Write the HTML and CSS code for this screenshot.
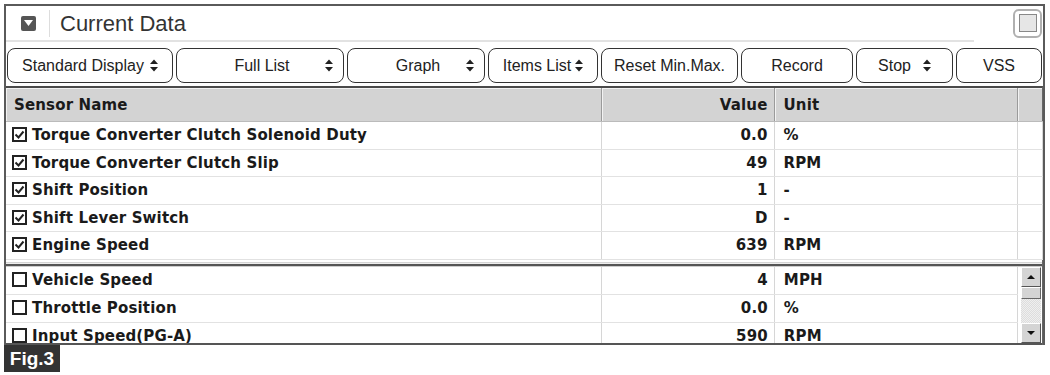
FILE: index.html
```html
<!DOCTYPE html>
<html lang="en">

<head>
    <meta charset="UTF-8">
    <meta name="viewport" content="width=device-width, initial-scale=1.0">
    <link rel="stylesheet" href="styles.css">
</head>

<body>
    <div class="panel">
        <div class="title-bar">
            <span class="collapse">
                <svg width="9" height="6" viewBox="0 0 9 6"><path d="M0 0 H9 L4.5 6 Z" fill="#fff" /></svg>
            </span>
            <span class="title">Current Data</span>
            <span class="maximize"><span></span></span>
        </div>
        <div class="title-rule"></div>

        <div class="toolbar">
            <div class="btn w-std">Standard Display <i class="spin"></i></div>
            <div class="btn w-full spread"><span></span>Full List <i class="spin"></i></div>
            <div class="btn w-graph spread"><span></span>Graph <i class="spin"></i></div>
            <div class="btn w-items">Items List <i class="spin"></i></div>
            <div class="btn w-reset">Reset Min.Max.</div>
            <div class="btn w-record">Record</div>
            <div class="btn w-stop">Stop <i class="spin"></i></div>
            <div class="btn w-vss">VSS</div>
        </div>

        <div class="grid">
            <table class="data">
                <colgroup>
                    <col class="c-name">
                    <col class="c-value">
                    <col class="c-unit">
                    <col class="c-extra">
                </colgroup>
                <thead>
                    <tr>
                        <th class="name">Sensor Name</th>
                        <th class="value">Value</th>
                        <th class="unit">Unit</th>
                        <th></th>
                    </tr>
                </thead>
                <tbody>
                    <tr>
                        <td class="name"><i class="chk on"></i>Torque Converter Clutch Solenoid Duty</td>
                        <td class="value">0.0</td>
                        <td class="unit">%</td>
                        <td></td>
                    </tr>
                    <tr>
                        <td class="name"><i class="chk on"></i>Torque Converter Clutch Slip</td>
                        <td class="value">49</td>
                        <td class="unit">RPM</td>
                        <td></td>
                    </tr>
                    <tr>
                        <td class="name"><i class="chk on"></i>Shift Position</td>
                        <td class="value">1</td>
                        <td class="unit">-</td>
                        <td></td>
                    </tr>
                    <tr>
                        <td class="name"><i class="chk on"></i>Shift Lever Switch</td>
                        <td class="value">D</td>
                        <td class="unit">-</td>
                        <td></td>
                    </tr>
                    <tr>
                        <td class="name"><i class="chk on"></i>Engine Speed</td>
                        <td class="value">639</td>
                        <td class="unit">RPM</td>
                        <td></td>
                    </tr>
                </tbody>
            </table>

            <div class="splitter"></div>

            <div class="lower">
                <table class="data">
                    <colgroup>
                        <col class="c-name">
                        <col class="c-value">
                        <col class="c-unit">
                    </colgroup>
                    <tbody>
                        <tr>
                            <td class="name"><i class="chk"></i>Vehicle Speed</td>
                            <td class="value">4</td>
                            <td class="unit">MPH</td>
                        </tr>
                        <tr>
                            <td class="name"><i class="chk"></i>Throttle Position</td>
                            <td class="value">0.0</td>
                            <td class="unit">%</td>
                        </tr>
                        <tr class="cut">
                            <td class="name"><i class="chk"></i>Input Speed(PG-A)</td>
                            <td class="value">590</td>
                            <td class="unit">RPM</td>
                        </tr>
                    </tbody>
                </table>
                <div class="scrollbar">
                    <div class="arrow up"></div>
                    <div class="thumb"></div>
                    <div class="track"></div>
                    <div class="arrow down"></div>
                </div>
            </div>
        </div>
    </div>
    <div class="fig">Fig.3</div>
</body>

</html>
```

FILE: styles.css
```css
body {
    margin: 0;
    background: #fff;
    font-family: "Liberation Sans", Arial, sans-serif;
    color: #222;
}

.panel {
    margin: 4px 0 0 4px;
    width: 1037px;
    border: 2px solid #5a5a5a;
    border-bottom: none;
}

.title-bar {
    height: 34px;
    display: flex;
    align-items: center;
}

.collapse {
    width: 15px;
    height: 15px;
    margin-left: 15px;
    background: #555;
    border-radius: 2px;
    display: flex;
    align-items: center;
    justify-content: center;
}

.title {
    margin-left: 13px;
    padding-left: 10px;
    border-left: 1px solid #ddd;
    height: 27px;
    line-height: 27px;
    font-size: 22px;
    color: #333;
}

.maximize {
    margin-left: auto;
    margin-right: 1px;
    width: 25px;
    height: 25px;
    border: 2px solid #b0b0b0;
    border-radius: 6px;
    display: flex;
    align-items: center;
    justify-content: center;
}

.maximize span {
    width: 16px;
    height: 16px;
    border: 1px solid #888;
    background: #e6e6e6;
}

.title-rule {
    width: 968px;
    height: 2px;
    background: #e2e2e2;
}

.toolbar {
    display: flex;
    gap: 3px;
    padding: 6px 0 3px 1px;
}

.btn {
    height: 35px;
    box-sizing: border-box;
    border: 1.5px solid #333;
    border-radius: 8px;
    display: flex;
    align-items: center;
    justify-content: center;
    gap: 6px;
    font-size: 16px;
    color: #222;
}

.btn.spread {
    justify-content: space-between;
    padding: 0 10px;
}

.btn.spread span {
    width: 12px;
}

.w-std { width: 166px; }
.w-full { width: 168px; }
.w-graph { width: 138px; }
.w-items { width: 110px; gap: 4px; }
.w-reset { width: 137px; }
.w-record { width: 112px; }
.w-stop { width: 97px; gap: 12px; }
.w-vss { width: 86px; }

.spin {
    width: 8px;
    height: 13px;
    display: inline-block;
    background: url("data:image/svg+xml;utf8,<svg xmlns='http://www.w3.org/2000/svg' width='8' height='13'><path d='M0 5 L4 0.5 L8 5 Z M0 8 L8 8 L4 12.5 Z' fill='%23222'/></svg>") center / 8px 13px no-repeat;
}

.grid {
    border-top: 2px solid #4a4a4a;
    border-right: 1px solid #666;
}

.data {
    width: 100%;
    table-layout: fixed;
    border-collapse: collapse;
    font-family: "DejaVu Sans", Verdana, sans-serif;
    font-weight: bold;
    font-size: 15px;
    letter-spacing: 0.15px;
    color: #1a1a1a;
}

.c-name { width: 595px; }
.c-value { width: 173px; }
.c-unit { width: 243px; }
.c-extra { width: 25px; }

.data th {
    height: 33px;
    background: #d3d3d3;
    border-right: 1px solid #9a9a9a;
    box-shadow: inset 1px 1px 0 #f2f2f2;
    border-bottom: 1px solid #bbb;
    text-align: left;
    padding: 0 8px;
}

.data th:last-child {
    border-right: none;
}

.data td {
    height: 26.5px;
    padding: 0 8px 0 7px;
    border-bottom: 1px solid #e2e2e2;
    border-right: 1px solid #d6d6d6;
    white-space: nowrap;
    overflow: hidden;
}

.data td.name {
    padding-left: 6px;
}

.data .value {
    text-align: right;
    padding-right: 6px;
}

.data .unit {
    padding-left: 9px;
}

.chk {
    display: inline-block;
    width: 15px;
    height: 15px;
    box-sizing: border-box;
    border: 2px solid #222;
    vertical-align: -2px;
    margin-right: 5px;
}

.chk.on {
    background: url("data:image/svg+xml;utf8,<svg xmlns='http://www.w3.org/2000/svg' width='11' height='11'><path d='M1.5 5.5 L4.5 8.5 L9.5 2.5' fill='none' stroke='%23222' stroke-width='2'/></svg>") center / 11px 11px no-repeat;
}

.splitter {
    margin-top: 2px;
    height: 1px;
    background: #eee;
    border-top: 1px solid #d4d4d4;
    border-bottom: 2px solid #555;
    box-shadow: 0 1px 0 #ccc;
    margin-bottom: 1px;
}

.lower {
    display: flex;
    height: 76px;
    overflow: hidden;
    border-bottom: 2px solid #555;
}

.lower .data {
    width: 1012px;
    flex: none;
}

.lower .data td {
    height: 27px;
}

.lower .data tr.cut td {
    vertical-align: top;
    padding-top: 4px;
}

.scrollbar {
    width: 20px;
    margin-left: 3px;
    display: flex;
    flex-direction: column;
    background: #e4e4e4;
}

.arrow {
    height: 20px;
    box-sizing: border-box;
    background: #d4d4d4;
    border: 1px solid #fff;
    border-right-color: #555;
    border-bottom-color: #555;
    display: flex;
    align-items: center;
    justify-content: center;
}

.arrow::after {
    content: "";
    border-left: 4px solid transparent;
    border-right: 4px solid transparent;
}

.arrow.up::after {
    border-bottom: 4px solid #111;
}

.arrow.down::after {
    border-top: 4px solid #111;
}

.thumb {
    height: 10px;
    background: #d4d4d4;
    border: 1px solid #fff;
    border-right-color: #666;
    border-bottom-color: #666;
}

.track {
    flex: 1;
    background: repeating-conic-gradient(#ddd 0 25%, #efefef 0 50%) 0 0 / 2px 2px;
}

.fig {
    margin: 0 0 0 4px;
    width: 56px;
    height: 27px;
    background: #333;
    color: #fff;
    font-weight: bold;
    font-size: 19px;
    line-height: 27px;
    text-align: center;
}
```
